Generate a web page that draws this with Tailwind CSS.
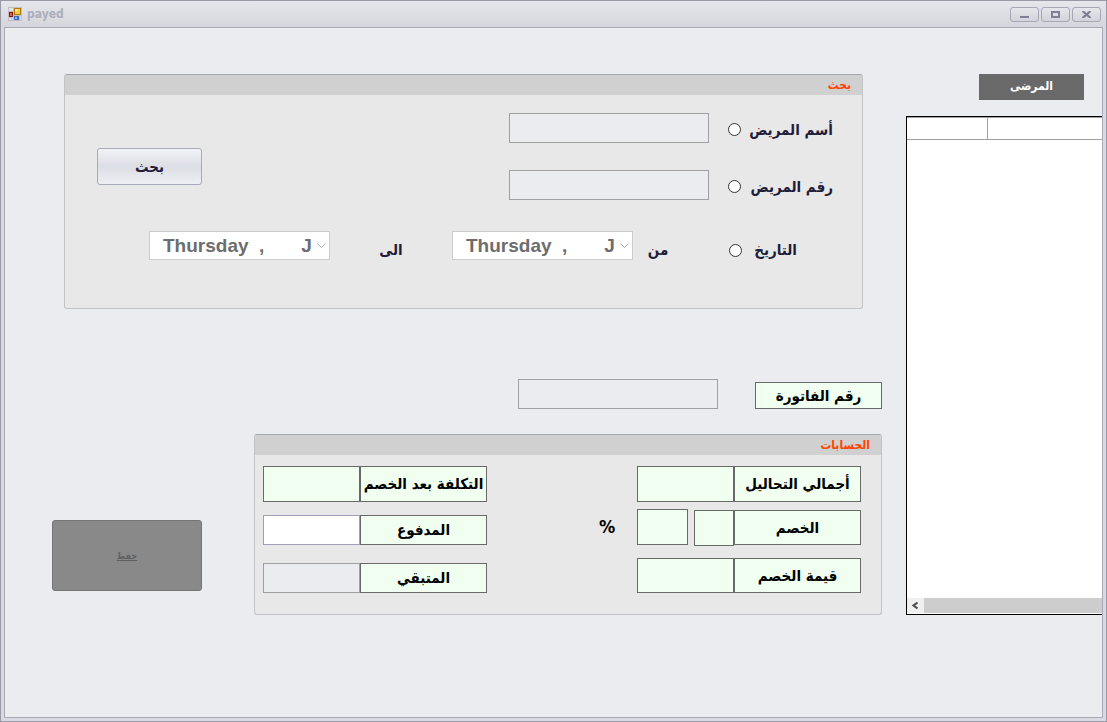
<!DOCTYPE html>
<html lang="ar">
<head>
<meta charset="utf-8">
<title>payed</title>
<script src="https://cdn.jsdelivr.net/npm/@tailwindcss/browser@4"></script>
</head>
<body class="min-h-screen flex flex-col bg-[#d9dae1] border border-[#9a9aa6] font-['DejaVu_Sans_Condensed','DejaVu_Sans',sans-serif] text-[15px] leading-6 font-bold text-[#1f1d3a]">
  <header class="h-[26px] shrink-0 flex items-center justify-between pl-[7px] pr-[5px] bg-linear-to-b from-[#e6e7ec] to-[#d5d6dd]">
    <div class="flex items-center gap-[5px]">
      <svg class="w-[14px] h-[14px]" viewBox="0 0 14 14" aria-hidden="true" shape-rendering="crispEdges">
        <path d="M0 0H14V14H0Z" fill="#bfc0c6"/>
        <path d="M1 1H5V4H1ZM1 11H3V13H1ZM4 11H5V13H4ZM12 9H13V13H12Z" fill="#e4e4e8"/>
        <path d="M6 1H13V8H6Z" fill="#b07a08"/><path d="M7 2H12V7H7Z" fill="#fbc93e"/><path d="M7 2H10V4H7Z" fill="#ffe794"/>
        <path d="M1 5H5V10H1Z" fill="#8c1410"/><path d="M2 6H4V9H2Z" fill="#d6675c"/>
        <path d="M6 9H11V13H6Z" fill="#3c6cc4"/><path d="M7 10H9V12H7Z" fill="#8db4f4"/>
      </svg>
      <h1 class="text-xs leading-4 text-[#acaeb9]">payed</h1>
    </div>
    <div class="flex gap-[2px]">
      <button aria-label="Minimize" class="w-[29px] h-[15px] flex items-center justify-center rounded-[3px] border border-[#a6a7b4] bg-linear-to-b from-[#e6e7ec] to-[#d2d3db]">
        <svg class="w-[9px] h-[7px]" viewBox="0 0 9 7" shape-rendering="crispEdges"><path d="M0 5H9V7H0Z" fill="#7e7f92"/></svg>
      </button>
      <button aria-label="Maximize" class="w-[29px] h-[15px] flex items-center justify-center rounded-[3px] border border-[#a6a7b4] bg-linear-to-b from-[#e6e7ec] to-[#d2d3db]">
        <svg class="w-[9px] h-[7px]" viewBox="0 0 9 7" shape-rendering="crispEdges"><path d="M1 1H8V6H1Z" fill="none" stroke="#7e7f92" stroke-width="2"/></svg>
      </button>
      <button aria-label="Close" class="w-[29px] h-[15px] flex items-center justify-center rounded-[3px] border border-[#a6a7b4] bg-linear-to-b from-[#e6e7ec] to-[#d2d3db]">
        <svg class="w-[9px] h-[7px]" viewBox="0 0 9 7"><path d="M.5 0L8.500 7M8.500 0L.5 7" stroke="#7e7f92" stroke-width="2.200"/></svg>
      </button>
    </div>
  </header>

  <main class="flex-1 flex mx-[3px] mb-[3px] border border-[#a9aab6] bg-[#ebecf0] pt-[46px] overflow-hidden">
    <div class="flex-1 min-w-0">
      <section class="ml-[59px] mr-[43px] h-[235px] rounded-[3px] border border-[#c2c3c6] border-t-[#a6a7a9] bg-[#e8e8e8]">
        <h2 dir="rtl" class="h-5 pr-[11px] bg-[#d0d0d0] text-xs leading-5 text-[#ff4500]">بحث</h2>
        <div class="flex justify-between pl-8 pr-[29px] pt-[18px]">
          <button class="w-[105px] h-[37px] mt-[35px] rounded-[3px] border border-[#a7abb8] bg-linear-to-b from-[#f2f3f7] via-[#dcdee5] to-[#eeeff4]">بحث</button>
          <div class="flex flex-col gap-[27px]">
            <div class="flex items-center gap-[19px]">
              <input aria-label="أسم المريض" class="w-[200px] h-[30px] px-2 border border-[#a0a0a0] bg-[#ebecf0]">
              <div class="w-[105px] pt-[3px] flex items-center gap-[6px]">
                <input type="radio" name="by" id="by-name" class="appearance-none shrink-0 w-[13px] h-[13px] rounded-full border border-[#333] bg-white checked:border-4">
                <label for="by-name" dir="rtl" class="flex-1 whitespace-nowrap">أسم المريض</label>
              </div>
            </div>
            <div class="flex items-center gap-[19px]">
              <input aria-label="رقم المريض" class="w-[200px] h-[30px] px-2 border border-[#a0a0a0] bg-[#ebecf0]">
              <div class="w-[105px] pt-[3px] flex items-center gap-[6px]">
                <input type="radio" name="by" id="by-number" class="appearance-none shrink-0 w-[13px] h-[13px] rounded-full border border-[#333] bg-white checked:border-4">
                <label for="by-number" dir="rtl" class="flex-1 whitespace-nowrap">رقم المريض</label>
              </div>
            </div>
          </div>
        </div>
        <div class="flex items-start justify-end pr-[29px] pt-[31px]">
          <div class="grid items-center">
            <select id="to" class="col-start-1 row-start-1 appearance-none w-[181px] h-[29px] pl-[13px] border border-[#ccc] bg-white font-['Liberation_Sans',sans-serif] text-[19px] leading-6 text-[#6d6d6d]"><option>Thursday&nbsp;&nbsp;,&nbsp;&nbsp;&nbsp;&nbsp;&nbsp;&nbsp;&nbsp;J</option></select>
            <svg class="col-start-1 row-start-1 justify-self-end mr-1 w-[9px] h-[6px] pointer-events-none" viewBox="0 0 9 6"><path d="M.5 .5L4.500 4.500L8.500 .5" fill="none" stroke="#aaa"/></svg>
          </div>
          <label for="to" dir="rtl" class="w-[122px] pt-[7px] text-center">الى</label>
          <div class="grid items-center">
            <select id="from" class="col-start-1 row-start-1 appearance-none w-[181px] h-[29px] pl-[13px] border border-[#ccc] bg-white font-['Liberation_Sans',sans-serif] text-[19px] leading-6 text-[#6d6d6d]"><option>Thursday&nbsp;&nbsp;,&nbsp;&nbsp;&nbsp;&nbsp;&nbsp;&nbsp;&nbsp;J</option></select>
            <svg class="col-start-1 row-start-1 justify-self-end mr-1 w-[9px] h-[6px] pointer-events-none" viewBox="0 0 9 6"><path d="M.5 .5L4.500 4.500L8.500 .5" fill="none" stroke="#aaa"/></svg>
          </div>
          <label for="from" dir="rtl" class="w-[50px] pt-[7px] text-center">من</label>
          <div class="w-[150px] pt-[7px] pl-[46px] pr-9 flex items-center gap-[6px]">
            <input type="radio" name="by" id="by-date" class="appearance-none shrink-0 w-[13px] h-[13px] rounded-full border border-[#333] bg-white checked:border-4">
            <label for="by-date" dir="rtl" class="flex-1 whitespace-nowrap">التاريخ</label>
          </div>
        </div>
      </section>

      <div class="flex justify-end items-end gap-[37px] mr-6 mt-[70px] text-black">
        <input id="invoice" class="w-[200px] h-[30px] px-2 border border-[#a0a0a0] bg-[#ebecf0]">
        <label for="invoice" dir="rtl" class="w-[127px] h-[27px] flex items-center justify-center border border-[#696969] bg-[#f0fff0]">رقم الفاتورة</label>
      </div>

      <div class="flex items-start gap-[52px] ml-[47px] mr-6 mt-[25px]">
        <button disabled dir="rtl" class="w-[150px] h-[71px] mt-[86px] rounded-[3px] border border-[#747474] bg-[#898989] text-[9px] text-[#5f5f5f] underline">حفظ</button>
        <section class="flex-1 h-[181px] rounded-[3px] border border-[#c2c3c6] border-t-[#a6a7a9] bg-[#e8e8e8] text-black">
          <h2 dir="rtl" class="h-5 pr-[11px] bg-[#d0d0d0] text-xs leading-5 text-[#ff4500]">الحسابات</h2>
          <div class="flex justify-between pl-2 pr-5 pt-[11px]">
            <div>
              <div class="flex h-9">
                <output id="after" class="w-[97px] border border-[#696969] bg-[#f0fff0]"></output>
                <label for="after" dir="rtl" class="w-[127px] flex items-center justify-center whitespace-nowrap border border-[#696969] bg-[#f0fff0]">التكلفة بعد الخصم</label>
              </div>
              <div class="flex h-[30px] mt-[13px]">
                <input id="paid" class="w-[97px] px-1 border border-[#a09fb8] bg-white">
                <label for="paid" dir="rtl" class="w-[127px] flex items-center justify-center border border-[#696969] bg-[#f0fff0]">المدفوع</label>
              </div>
              <div class="flex h-[30px] mt-[18px]">
                <input id="rest" class="w-[97px] px-1 border border-[#a0a0a0] bg-[#ebecf0]">
                <label for="rest" dir="rtl" class="w-[127px] flex items-center justify-center border border-[#696969] bg-[#f0fff0]">المتبقي</label>
              </div>
            </div>
            <div>
              <div class="flex justify-end h-9">
                <output id="total" class="w-[97px] border border-[#696969] bg-[#f0fff0]"></output>
                <label for="total" dir="rtl" class="w-[127px] flex items-center justify-center whitespace-nowrap border border-[#696969] bg-[#f0fff0]">أجمالي التحاليل</label>
              </div>
              <div class="flex items-start mt-[7px]">
                <span class="w-[38px] h-9 flex items-center text-lg">%</span>
                <output class="w-[51px] h-9 border border-[#696969] bg-[#f0fff0]"></output>
                <output id="discount" class="w-10 h-9 mt-px ml-[6px] border border-[#696969] bg-[#f0fff0]"></output>
                <label for="discount" dir="rtl" class="w-[127px] h-[35px] mt-px flex items-center justify-center border border-[#696969] bg-[#f0fff0]">الخصم</label>
              </div>
              <div class="flex justify-end h-[35px] mt-3">
                <output id="amount" class="w-[97px] border border-[#696969] bg-[#f0fff0]"></output>
                <label for="amount" dir="rtl" class="w-[127px] flex items-center justify-center border border-[#696969] bg-[#f0fff0]">قيمة الخصم</label>
              </div>
            </div>
          </div>
        </section>
      </div>
    </div>

    <aside class="w-[196px] shrink-0">
      <h2 dir="rtl" class="ml-[73px] mr-[18px] h-[26px] bg-[#696969] text-center text-xs leading-6 text-white">المرضى</h2>
      <div class="mt-4 h-[499px] flex flex-col border border-r-0 border-black bg-white">
        <table class="w-full">
          <thead><tr class="h-[22px]"><th class="w-20 border-r border-y border-[#a0a0a0]"></th><th class="border-y border-[#a0a0a0]"></th></tr></thead>
        </table>
        <div class="mt-auto mb-px h-[15px] flex bg-[#cdcdcd]">
          <button aria-label="Scroll left" class="w-[17px] pr-px flex items-center justify-center bg-[#f0f0f0]">
            <svg class="w-[6px] h-[7px]" viewBox="0 0 6 7"><path d="M5.500 .5L1.500 3.500L5.500 6.500" fill="none" stroke="#505050" stroke-width="2"/></svg>
          </button>
        </div>
      </div>
    </aside>
  </main>
</body>
</html>
